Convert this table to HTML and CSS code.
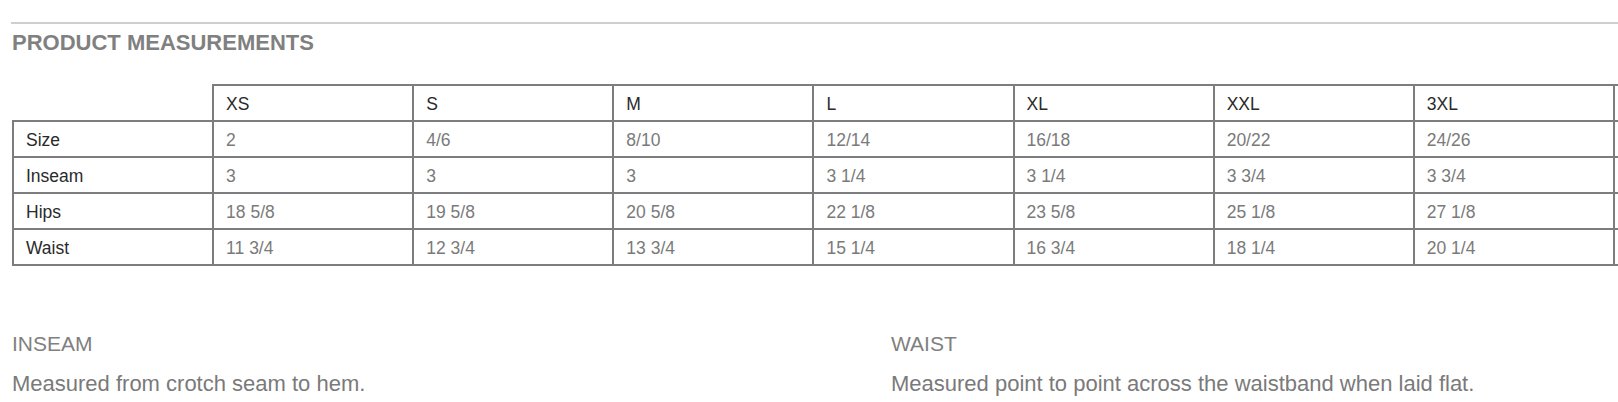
FILE: index.html
```html
<!DOCTYPE html>
<html lang="en">
<head>
<meta charset="utf-8">
<title>Product Measurements</title>
<link rel="stylesheet" href="styles.css">
</head>
<body>
<div class="page">
  <hr class="rule">
  <h2 class="heading">PRODUCT MEASUREMENTS</h2>
  <div class="table-wrap">
    <table class="sizes">
      <thead>
        <tr>
          <th class="label corner"></th>
          <th>XS</th><th>S</th><th>M</th><th>L</th><th>XL</th><th>XXL</th><th>3XL</th><th class="overflow"></th>
        </tr>
      </thead>
      <tbody>
        <tr>
          <th class="label">Size</th>
          <td>2</td><td>4/6</td><td>8/10</td><td>12/14</td><td>16/18</td><td>20/22</td><td>24/26</td><td class="overflow"></td>
        </tr>
        <tr>
          <th class="label">Inseam</th>
          <td>3</td><td>3</td><td>3</td><td>3 1/4</td><td>3 1/4</td><td>3 3/4</td><td>3 3/4</td><td class="overflow"></td>
        </tr>
        <tr>
          <th class="label">Hips</th>
          <td>18 5/8</td><td>19 5/8</td><td>20 5/8</td><td>22 1/8</td><td>23 5/8</td><td>25 1/8</td><td>27 1/8</td><td class="overflow"></td>
        </tr>
        <tr>
          <th class="label">Waist</th>
          <td>11 3/4</td><td>12 3/4</td><td>13 3/4</td><td>15 1/4</td><td>16 3/4</td><td>18 1/4</td><td>20 1/4</td><td class="overflow"></td>
        </tr>
      </tbody>
    </table>
  </div>
  <div class="notes">
    <div class="note">
      <h3 class="note-title">INSEAM</h3>
      <p class="note-text">Measured from crotch seam to hem.</p>
    </div>
    <div class="note">
      <h3 class="note-title">WAIST</h3>
      <p class="note-text">Measured point to point across the waistband when laid flat.</p>
    </div>
  </div>
</div>
</body>
</html>
```
FILE: styles.css
```css
html, body {
  margin: 0;
  padding: 0;
  background: #ffffff;
  overflow: hidden;
}

body {
  font-family: "Liberation Sans", Arial, Helvetica, sans-serif;
}

.page {
  padding: 22px 0 0 11px;
}

.rule {
  margin: 0;
  border: 0;
  height: 2px;
  background: #cfcfcf;
}

.heading {
  margin: 6px 0 0 1px;
  font-size: 22px;
  line-height: 25px;
  font-weight: bold;
  color: #808080;
}

.table-wrap {
  margin-top: 29px;
  padding-left: 1px;
  overflow: hidden;
}

.sizes {
  border-collapse: collapse;
  table-layout: fixed;
  width: 1803px;
}

.sizes th,
.sizes td {
  width: 174px;
  height: 31px;
  padding: 3px 12px 0;
  border: 2px solid #7d7d80;
  text-align: left;
  font-size: 17.5px;
  font-weight: normal;
  white-space: nowrap;
  overflow: hidden;
}

.sizes th.label {
  width: 175px;
}

.sizes th {
  color: #2a2a2a;
}

.sizes td {
  color: #7a7a7a;
}

.sizes th.corner {
  border-top: none;
  border-left: none;
}

.notes {
  display: grid;
  grid-template-columns: 879px 1fr;
  margin-top: 66px;
  padding-left: 1px;
}

.note-title {
  margin: 0;
  font-size: 21px;
  line-height: 24px;
  font-weight: normal;
  color: #808080;
}

.note-text {
  margin: 15px 0 0;
  font-size: 22px;
  line-height: 25px;
  color: #7a7a7a;
}
```
